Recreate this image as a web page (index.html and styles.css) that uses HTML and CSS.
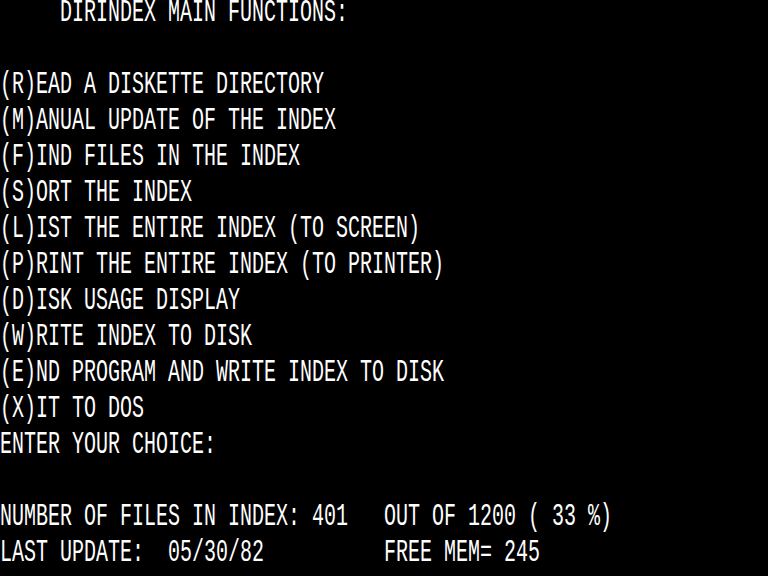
FILE: index.html
```html
<!DOCTYPE html>
<html>
<head>
<meta charset="utf-8">
<link rel="stylesheet" href="styles.css">
</head>
<body>
<div class="screen">
<pre class="text">     DIRINDEX MAIN FUNCTIONS:

(R)EAD A DISKETTE DIRECTORY
(M)ANUAL UPDATE OF THE INDEX
(F)IND FILES IN THE INDEX
(S)ORT THE INDEX
(L)IST THE ENTIRE INDEX (TO SCREEN)
(P)RINT THE ENTIRE INDEX (TO PRINTER)
(D)ISK USAGE DISPLAY
(W)RITE INDEX TO DISK
(E)ND PROGRAM AND WRITE INDEX TO DISK
(X)IT TO DOS
ENTER YOUR CHOICE:

NUMBER OF FILES IN INDEX: 401   OUT OF 1200 ( 33 %)
LAST UPDATE:  05/30/82          FREE MEM= 245</pre>
</div>
</body>
</html>
```
FILE: styles.css
```css
html, body {
  margin: 0;
  padding: 0;
  background: #000;
  overflow: hidden;
}
.screen {
  width: 768px;
  height: 576px;
  background: #000;
  overflow: hidden;
}
.text {
  margin: -5px 0 0 0;
  color: #fff;
  font-family: "Liberation Mono", monospace;
  font-size: 20px;
  line-height: 22.5px;
  transform: scaleY(1.6);
  transform-origin: 0 0;
  white-space: pre;
}
```
